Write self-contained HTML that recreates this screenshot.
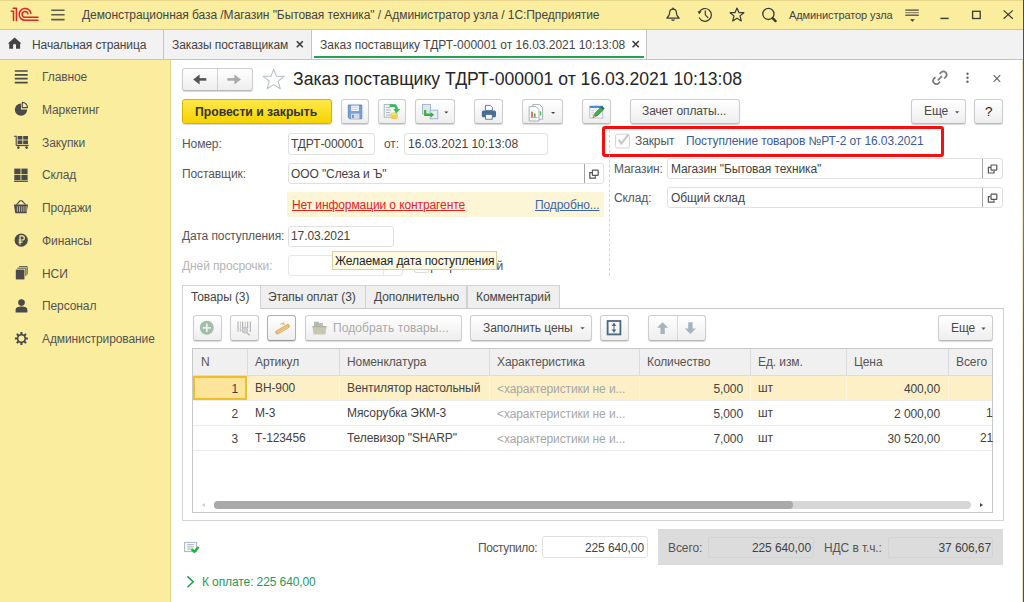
<!DOCTYPE html>
<html><head><meta charset="utf-8">
<style>
*{box-sizing:border-box;margin:0;padding:0}
html,body{width:1024px;height:602px;overflow:hidden;background:#fff;font-family:"Liberation Sans",sans-serif;font-size:12px;color:#545454;letter-spacing:-0.1px}
.a{position:absolute}
.t{position:absolute;white-space:nowrap;line-height:14px}
#top{left:0;top:0;width:1024px;height:30px;background:#fbed9e;border-top:1px solid #e6d58a;border-bottom:1px solid #d6c77f}
#tabs{left:0;top:30px;width:1024px;height:30px;background:#f2f2f2;border-bottom:1px solid #c4c4c4}
#side{left:0;top:60px;width:171px;height:542px;background:#fbed9e;border-right:1px solid #e0d28c}
#rline{left:1023px;top:0;width:1px;height:602px;background:linear-gradient(#3d4a52,#58625e 120px,#747a6e 220px,#6d5a3a 330px,#6a4826 420px,#5e4a30 602px)}
#rline2{left:1022px;top:60px;width:1px;height:542px;background:#ebe3c4}
.btn{position:absolute;border:1px solid #cdcdcd;border-bottom-color:#b9b9b9;border-radius:3px;background:linear-gradient(#ffffff,#eeeeee);box-shadow:0 1px 1px rgba(0,0,0,.16)}
.inp{position:absolute;border:1px solid #e0e0e0;border-radius:3px;background:#fff}
.lbl{color:#555}
.val{color:#424242}
.dd{position:absolute;width:0;height:0;border-left:3px solid transparent;border-right:3px solid transparent;border-top:3px solid #555}
</style></head><body>
<!-- top bar -->
<div id="top" class="a"></div>

<div class="t" style="left:82px;top:8px;color:#444;letter-spacing:-0.07px">Демонстрационная база /Магазин "Бытовая техника" / Администратор узла / 1С:Предприятие</div>
<div class="t" style="left:789px;top:8px;color:#444;font-size:11px">Администратор узла</div>

<!-- tabs -->
<div id="tabs" class="a"></div>
<div class="t" style="left:32px;top:38px;color:#444">Начальная страница</div>
<div class="a" style="left:163px;top:30px;width:1px;height:29px;background:#c4c4c4"></div>
<div class="t" style="left:172px;top:38px;color:#444">Заказы поставщикам</div>
<div class="a" style="left:311px;top:30px;width:1px;height:29px;background:#c4c4c4"></div>
<div class="a" style="left:312px;top:30px;width:335px;height:29px;background:#fff;border-right:1px solid #c4c4c4"></div>
<div class="a" style="left:314px;top:56px;width:330px;height:2px;background:#27a154"></div>
<div class="t" style="left:320px;top:38px;color:#444;letter-spacing:-0.02px">Заказ поставщику ТДРТ-000001 от 16.03.2021 10:13:08</div>

<!-- sidebar -->
<div id="side" class="a"></div>
<div class="t" style="left:42px;top:70px">Главное</div>
<div class="t" style="left:42px;top:103px">Маркетинг</div>
<div class="t" style="left:42px;top:136px">Закупки</div>
<div class="t" style="left:42px;top:168px">Склад</div>
<div class="t" style="left:42px;top:201px">Продажи</div>
<div class="t" style="left:42px;top:234px">Финансы</div>
<div class="t" style="left:42px;top:267px">НСИ</div>
<div class="t" style="left:42px;top:299px">Персонал</div>
<div class="t" style="left:42px;top:332px">Администрирование</div>

<div id="rline2" class="a"></div><div id="rline" class="a"></div>

<!-- form header -->
<div class="btn" style="left:182px;top:68px;width:71px;height:23px"></div>
<div class="a" style="left:217px;top:69px;width:1px;height:21px;background:#d0d0d0"></div>
<div class="t" style="left:293px;top:69px;font-size:17.6px;line-height:20px;color:#262626;letter-spacing:0">Заказ поставщику ТДРТ-000001 от 16.03.2021 10:13:08</div>

<!-- toolbar -->
<div class="a" style="left:182px;top:99px;width:150px;height:25px;border:1px solid #d2b400;border-radius:3px;background:linear-gradient(#ffe94a,#f5d200);box-shadow:0 1px 1px rgba(0,0,0,.15)"></div>
<div class="t" style="left:195px;top:105px;font-weight:bold;font-size:12.2px;color:#333;letter-spacing:0">Провести и закрыть</div>
<div class="btn" style="left:341px;top:99px;width:28px;height:25px"></div>
<div class="btn" style="left:378px;top:99px;width:28px;height:25px"></div>
<div class="btn" style="left:415px;top:99px;width:40px;height:25px"></div>
<div class="btn" style="left:474px;top:99px;width:29px;height:25px"></div>
<div class="btn" style="left:522px;top:99px;width:41px;height:25px"></div>
<div class="btn" style="left:582px;top:99px;width:29px;height:25px"></div>
<div class="btn" style="left:630px;top:99px;width:110px;height:25px"></div>
<div class="t" style="left:642px;top:104px;color:#4a4a4a">Зачет оплаты...</div>
<div class="btn" style="left:911px;top:99px;width:55px;height:25px"></div>
<div class="t" style="left:924px;top:104px;color:#4a4a4a">Еще</div>
<div class="btn" style="left:974px;top:99px;width:29px;height:25px"></div>
<div class="t" style="left:985px;top:104px;color:#222;font-size:13.5px;line-height:16px">?</div>

<!-- red box -->
<div class="a" style="left:602px;top:126px;width:342px;height:31px;border:3px solid #fb0d0d;border-radius:3px"></div>
<div class="t" style="left:635px;top:134px">Закрыт</div>
<div class="t" style="left:686px;top:134px;color:#3c5a9a">Поступление товаров №РТ-2 от 16.03.2021</div>

<!-- fields left -->
<div class="t" style="left:182px;top:137px">Номер:</div>
<div class="inp" style="left:288px;top:133px;width:87px;height:22px"></div>
<div class="t val" style="left:291px;top:137px">ТДРТ-000001</div>
<div class="t" style="left:384px;top:137px">от:</div>
<div class="inp" style="left:404px;top:133px;width:144px;height:22px"></div>
<div class="t val" style="left:408px;top:137px;letter-spacing:0">16.03.2021 10:13:08</div>

<div class="t" style="left:182px;top:167px">Поставщик:</div>
<div class="inp" style="left:288px;top:163px;width:316px;height:21px"></div>
<div class="a" style="left:584px;top:164px;width:1px;height:19px;background:#a6a6a6"></div>
<div class="t val" style="left:291px;top:167px">ООО "Слеза и Ъ"</div>

<div class="a" style="left:287px;top:192px;width:317px;height:25px;background:#fdf6d6"></div>
<div class="t" style="left:292px;top:198px;color:#e8201e;text-decoration:underline">Нет информации о контрагенте</div>
<div class="t" style="left:535px;top:198px;color:#3d63a8;text-decoration:underline">Подробно...</div>

<div class="t" style="left:182px;top:229px">Дата поступления:</div>
<div class="inp" style="left:288px;top:226px;width:106px;height:21px"></div>
<div class="t val" style="left:291px;top:229px">17.03.2021</div>

<div class="t" style="left:182px;top:259px;color:#b5b5b5">Дней просрочки:</div>
<div class="inp" style="left:288px;top:255px;width:115px;height:21px;border-color:#e6e6e6"></div>

<!-- dashed separator -->
<div class="a" style="left:609px;top:130px;width:0;height:146px;border-left:1px dashed #d6d6d6"></div>

<!-- fields right -->
<div class="t" style="left:614px;top:162px">Магазин:</div>
<div class="inp" style="left:667px;top:158px;width:336px;height:21px"></div>
<div class="a" style="left:982px;top:159px;width:1px;height:19px;background:#a6a6a6"></div>
<div class="t val" style="left:671px;top:162px">Магазин "Бытовая техника"</div>
<div class="t" style="left:614px;top:191px">Склад:</div>
<div class="inp" style="left:667px;top:187px;width:336px;height:21px"></div>
<div class="a" style="left:982px;top:188px;width:1px;height:19px;background:#a6a6a6"></div>
<div class="t val" style="left:671px;top:191px">Общий склад</div>

<div class="a" style="left:383px;top:256px;width:1px;height:19px;background:#e6e6e6"></div>
<div class="a" style="left:391px;top:268px;width:0;height:0;border-left:2px solid transparent;border-right:2px solid transparent;border-top:2px solid #666"></div>
<div class="a" style="left:414px;top:258px;width:15px;height:15px;border:1px solid #dcdcdc;border-radius:2px;background:#fff"></div>
<div class="t" style="left:403px;top:259px;width:100px;text-align:right;overflow:hidden;color:#4d4d4d">Просроченный</div>
<!-- tooltip -->
<div class="a" style="left:332px;top:251px;width:165px;height:19px;background:#fffbe3;border:1px solid #d9cf9f"></div>
<div class="t" style="left:335px;top:254px;color:#222">Желаемая дата поступления</div>

<!-- tab panel -->
<div class="a" style="left:182px;top:308px;width:822px;height:213px;border:1px solid #d2d2d2;border-top-color:#c8c8c8"></div>
<div class="a" style="left:182px;top:285px;width:79px;height:24px;background:#fff;border:1px solid #d2d2d2;border-bottom:none"></div>
<div class="a" style="left:260px;top:285px;width:106px;height:23px;background:#efefef;border:1px solid #d2d2d2;border-bottom:none"></div>
<div class="a" style="left:365px;top:285px;width:102px;height:23px;background:#efefef;border:1px solid #d2d2d2;border-bottom:none"></div>
<div class="a" style="left:467px;top:285px;width:93px;height:23px;background:#efefef;border:1px solid #d2d2d2;border-bottom:none"></div>
<div class="t" style="left:191px;top:290px;color:#444">Товары (3)</div>
<div class="t" style="left:268px;top:290px;color:#444">Этапы оплат (3)</div>
<div class="t" style="left:374px;top:290px;color:#444">Дополнительно</div>
<div class="t" style="left:476px;top:290px;color:#444">Комментарий</div>

<div class="btn" style="left:193px;top:315px;width:29px;height:26px"></div>
<div class="btn" style="left:230px;top:315px;width:29px;height:26px"></div>
<div class="btn" style="left:267px;top:315px;width:29px;height:26px;border-color:#b0b0b0;border-bottom-color:#999"></div>
<div class="btn" style="left:305px;top:315px;width:157px;height:26px"></div>
<div class="t" style="left:333px;top:321px;color:#aaa;letter-spacing:0.1px">Подобрать товары...</div>
<div class="btn" style="left:470px;top:315px;width:122px;height:26px"></div>
<div class="t" style="left:483px;top:321px;color:#4a4a4a">Заполнить цены</div>
<div class="btn" style="left:600px;top:315px;width:29px;height:26px"></div>
<div class="btn" style="left:648px;top:315px;width:58px;height:26px"></div>
<div class="a" style="left:677px;top:316px;width:1px;height:24px;background:#d8d8d8"></div>
<div class="btn" style="left:938px;top:315px;width:55px;height:26px"></div>
<div class="t" style="left:951px;top:321px;color:#4a4a4a">Еще</div>

<!-- table -->
<div class="a" style="left:192px;top:348px;width:801px;height:165px;border:1px solid #c8c8c8;background:#fff"></div>
<div class="a" style="left:193px;top:349px;width:799px;height:27px;background:#f0f0f0;border-bottom:1px solid #dcdcdc"></div>
<div class="t" style="left:201px;top:355px">N</div>
<div class="t" style="left:255px;top:355px">Артикул</div>
<div class="t" style="left:347px;top:355px">Номенклатура</div>
<div class="t" style="left:497px;top:355px">Характеристика</div>
<div class="t" style="left:647px;top:355px">Количество</div>
<div class="t" style="left:758px;top:355px">Ед. изм.</div>
<div class="t" style="left:854px;top:355px">Цена</div>
<div class="t" style="left:956px;top:355px">Всего</div>


<!-- column dividers header -->
<div class="a" style="left:247px;top:349px;width:1px;height:27px;background:#dcdcdc"></div>
<div class="a" style="left:339px;top:349px;width:1px;height:27px;background:#dcdcdc"></div>
<div class="a" style="left:489px;top:349px;width:1px;height:27px;background:#dcdcdc"></div>
<div class="a" style="left:639px;top:349px;width:1px;height:27px;background:#dcdcdc"></div>
<div class="a" style="left:750px;top:349px;width:1px;height:27px;background:#dcdcdc"></div>
<div class="a" style="left:846px;top:349px;width:1px;height:27px;background:#dcdcdc"></div>
<div class="a" style="left:948px;top:349px;width:1px;height:27px;background:#dcdcdc"></div>
<!-- row1 -->
<div class="a" style="left:193px;top:376px;width:799px;height:24px;background:#fdf0c6"></div>
<div class="a" style="left:247px;top:376px;width:1px;height:24px;background:#fff6dc"></div>
<div class="a" style="left:339px;top:376px;width:1px;height:24px;background:#fff6dc"></div>
<div class="a" style="left:489px;top:376px;width:1px;height:24px;background:#fff6dc"></div>
<div class="a" style="left:639px;top:376px;width:1px;height:24px;background:#fff6dc"></div>
<div class="a" style="left:750px;top:376px;width:1px;height:24px;background:#fff6dc"></div>
<div class="a" style="left:846px;top:376px;width:1px;height:24px;background:#fff6dc"></div>
<div class="a" style="left:948px;top:376px;width:1px;height:24px;background:#fff6dc"></div>
<div class="a" style="left:193px;top:376px;width:54px;height:24px;background:#fce49a;border:2px solid #f3bd25"></div>
<div class="a" style="left:193px;top:400px;width:799px;height:1px;background:#ececec"></div>
<div class="a" style="left:193px;top:425px;width:799px;height:1px;background:#ececec"></div>
<div class="a" style="left:193px;top:450px;width:799px;height:1px;background:#ececec"></div>
<div class="t val" style="left:193px;top:382px;width:45px;text-align:right">1</div>
<div class="t val" style="left:255px;top:381px">ВН-900</div>
<div class="t val" style="left:347px;top:381px">Вентилятор настольный</div>
<div class="t" style="left:497px;top:382px;color:#a6a6a6">&lt;характеристики не и...</div>
<div class="t val" style="left:640px;top:382px;width:103px;text-align:right">5,000</div>
<div class="t val" style="left:758px;top:381px">шт</div>
<div class="t val" style="left:847px;top:382px;width:93px;text-align:right">400,00</div>
<div class="t val" style="left:193px;top:407px;width:45px;text-align:right">2</div>
<div class="t val" style="left:255px;top:406px">М-3</div>
<div class="t val" style="left:347px;top:406px">Мясорубка ЭКМ-3</div>
<div class="t" style="left:497px;top:407px;color:#a6a6a6">&lt;характеристики не и...</div>
<div class="t val" style="left:640px;top:407px;width:103px;text-align:right">5,000</div>
<div class="t val" style="left:758px;top:406px">шт</div>
<div class="t val" style="left:847px;top:407px;width:93px;text-align:right">2 000,00</div>
<div class="t val" style="left:986px;top:406px">1</div>
<div class="t val" style="left:193px;top:432px;width:45px;text-align:right">3</div>
<div class="t val" style="left:255px;top:431px">Т-123456</div>
<div class="t val" style="left:347px;top:431px">Телевизор "SHARP"</div>
<div class="t" style="left:497px;top:432px;color:#a6a6a6">&lt;характеристики не и...</div>
<div class="t val" style="left:640px;top:432px;width:103px;text-align:right">7,000</div>
<div class="t val" style="left:758px;top:431px">шт</div>
<div class="t val" style="left:847px;top:432px;width:93px;text-align:right">30 520,00</div>
<div class="t val" style="left:980px;top:431px">21</div>
<!-- scrollbar -->
<div class="a" style="left:214px;top:501px;width:757px;height:8px;border-radius:4px;background:#d6d6d6"></div>
<div class="a" style="left:214px;top:501px;width:579px;height:8px;border-radius:4px;background:#a9a9a9"></div>
<div class="a" style="left:202px;top:503px;width:0;height:0;border-top:2.5px solid transparent;border-bottom:2.5px solid transparent;border-right:3px solid #ccc"></div>
<div class="a" style="left:980px;top:503px;width:0;height:0;border-top:2.5px solid transparent;border-bottom:2.5px solid transparent;border-left:3px solid #444"></div>

<!-- footer -->
<div class="t" style="left:478px;top:541px;letter-spacing:-0.4px">Поступило:</div>
<div class="inp" style="left:542px;top:536px;width:106px;height:22px"></div>
<div class="t val" style="left:545px;top:541px;width:99px;text-align:right">225 640,00</div>
<div class="a" style="left:658px;top:529px;width:345px;height:36px;background:#dcdcdc"></div>
<div class="a" style="left:708px;top:537px;width:106px;height:21px;border:1px solid #d3d3d3;border-radius:2px"></div>
<div class="a" style="left:888px;top:537px;width:105px;height:21px;border:1px solid #d3d3d3;border-radius:2px"></div>
<div class="t" style="left:668px;top:541px">Всего:</div>
<div class="t val" style="left:737px;top:541px;width:74px;text-align:right">225 640,00</div>
<div class="t" style="left:824px;top:541px">НДС в т.ч.:</div>
<div class="t val" style="left:888px;top:541px;width:103px;text-align:right">37 606,67</div>
<div class="t" style="left:202px;top:575px;color:#23995a">К оплате: 225 640,00</div>

<svg class="a" style="left:0;top:0" width="1024" height="602" viewBox="0 0 1024 602">
<!-- 1C logo -->
<g fill="none" stroke="#d9252b" stroke-width="1.5" stroke-linecap="round" stroke-linejoin="round">
<path d="M11.3,11.3 H13.5 V20.4"/>
<path d="M13.2,8.3 H16.4 V20.4"/>
<path d="M38,20.3 H25 A5.9,5.9 0 1 1 30.9,13.4"/>
<path d="M38,17.3 H25 A2.9,2.9 0 1 1 27.9,13.8"/>
</g>
<!-- hamburger -->
<g stroke="#5f5c4c" stroke-width="1.6">
<path d="M51.2,10.2 H64.6 M51.2,14.8 H64.6 M51.2,19.6 H64.6"/>
</g>
<!-- bell -->
<g fill="none" stroke="#3a3a3a" stroke-width="1.2" stroke-linejoin="round">
<path d="M673,9.2 C670.3,9.2 669.6,11 669.6,13 C669.6,15.4 668.6,16.6 666.8,18.2 H679.2 C677.4,16.6 676.4,15.4 676.4,13 C676.4,11 675.7,9.2 673,9.2 Z"/>
</g>
<circle cx="673" cy="8.4" r="0.9" fill="#3a3a3a"/>
<path d="M671,19.6 A2,1.4 0 0 0 675,19.6 Z" fill="#3a3a3a"/>
<!-- history -->
<g fill="none" stroke="#3a3a3a" stroke-width="1.2" stroke-linecap="round">
<path d="M699.4,11.8 A6.4,6.4 0 1 1 699.4,18"/>
<path d="M705.3,10.8 V14.8 L707.9,17.6"/>
</g>
<path d="M697.6,11.2 L701.6,11.6 L699.2,14.2 Z" fill="#3a3a3a"/>
<!-- star top -->
<path d="M737,8 L738.9,12.6 L743.9,12.7 L740,15.9 L741.3,20.9 L737,18.2 L732.7,20.9 L734,15.9 L730.1,12.7 L735.1,12.6 Z" fill="none" stroke="#3a3a3a" stroke-width="1.2" stroke-linejoin="round"/>
<!-- search -->
<circle cx="768.4" cy="13.9" r="5.6" fill="none" stroke="#3a3a3a" stroke-width="1.3"/>
<path d="M772.6,18.1 L775.6,21.1" stroke="#3a3a3a" stroke-width="2.4" stroke-linecap="round"/>
<!-- filter -->
<path d="M905.3,10.1 H918.8" stroke="#5a5848" stroke-width="1.4"/>
<path d="M905.3,12.6 H918.8" stroke="#8f8a6e" stroke-width="1.3"/>
<path d="M905.3,15.2 H918.8" stroke="#5a5848" stroke-width="1.4"/>
<path d="M910,19.2 H914.8 L912.4,21.8 Z" fill="#3a3a3a"/>
<!-- window controls -->
<path d="M940.4,18.4 H948.7" stroke="#3a3a3a" stroke-width="1.4"/>
<rect x="972.6" y="11.3" width="7.6" height="7.2" fill="none" stroke="#3a3a3a" stroke-width="1.3"/>
<path d="M1003.6,10.4 L1012.8,18.8 M1012.8,10.4 L1003.6,18.8" stroke="#3a3a3a" stroke-width="1.2"/>
<!-- home -->
<path d="M7.8,43.6 L14.6,37.4 L21.5,43.6 H20.1 V48.7 H16 V44.2 H13.1 V48.7 H9.2 V43.6 Z" fill="#444"/>
<!-- tab x -->
<path d="M296.8,41.2 L302.8,47.2 M302.8,41.2 L296.8,47.2" stroke="#3a3a3a" stroke-width="1.6"/>
<path d="M632.6,41 L638.8,47.2 M638.8,41 L632.6,47.2" stroke="#3a3a3a" stroke-width="1.6"/>
<!-- sidebar icons -->
<g stroke="#4a4a4a" stroke-width="1.7">
<path d="M14.8,71 H27.7 M14.8,74.9 H27.7 M14.8,78.7 H27.7 M14.8,82.6 H27.7"/>
</g>
<path d="M21,103.4 A6.2,6.2 0 1 0 27.2,109.6 H21 Z" fill="#4a4a4a"/>
<path d="M22.3,102.4 A5.2,5.2 0 0 1 27.5,107.6 H22.3 Z" fill="#fbed9e" stroke="#4a4a4a" stroke-width="1.2" stroke-linejoin="round"/>
<g fill="#4a4a4a">
<rect x="17.6" y="136" width="4.8" height="3.6"/><rect x="23.2" y="136" width="4.8" height="3.6"/>
<rect x="17.6" y="140.4" width="4.8" height="3.6"/><rect x="23.2" y="140.4" width="4.8" height="3.6"/>
<rect x="16.2" y="144.8" width="12.4" height="1.3"/>
<circle cx="18.4" cy="147.6" r="1.3"/><circle cx="26.6" cy="147.6" r="1.3"/>
</g>
<path d="M13.9,136.2 H16.2 V145.4" fill="none" stroke="#4a4a4a" stroke-width="1.1"/>
<g fill="#4a4a4a">
<rect x="14.3" y="168.6" width="6.2" height="5.4"/><rect x="21.4" y="168.6" width="6.2" height="5.4"/>
<rect x="14.3" y="174.8" width="6.2" height="5.2"/><rect x="21.4" y="174.8" width="6.2" height="5.2"/>
<rect x="14" y="180.6" width="13.9" height="1.3"/>
</g>
<path d="M13.9,204.6 H28 L26.6,213.2 H15.3 Z" fill="#4a4a4a"/>
<path d="M16.5,204.6 L20,200.8 H22 L25.5,204.6" fill="none" stroke="#4a4a4a" stroke-width="1.1"/>
<g stroke="#fbed9e" stroke-width="0.7"><path d="M17.3,206.2 V211.8 M19.5,206.2 V211.8 M21.7,206.2 V211.8 M23.9,206.2 V211.8 M26.1,206.2 V211.8"/></g>
<circle cx="21.2" cy="240.2" r="6.6" fill="#4a4a4a"/>
<path d="M20,244.8 V235.8 H22.2 A2.1,2.1 0 0 1 22.2,240 H18.6 M18.6,242.2 H22.4" fill="none" stroke="#fbed9e" stroke-width="1.2"/>
<path d="M17.2,268.2 H25.8 V276 M19,266.6 H27.2 V274.4" fill="none" stroke="#4a4a4a" stroke-width="0.9"/>
<rect x="15.8" y="269.6" width="8.6" height="9.8" fill="#4a4a4a"/>
<circle cx="21.5" cy="302.6" r="3.3" fill="#4a4a4a"/>
<path d="M15.6,312.4 V310 C15.6,307.6 18,306.6 21.5,306.6 C25,306.6 27.4,307.6 27.4,310 V312.4 Z" fill="#4a4a4a"/>

<path d="M27.92,337.47 L27.92,339.53 L25.97,339.60 L25.41,340.96 L26.74,342.38 L25.28,343.84 L23.86,342.51 L22.50,343.07 L22.43,345.02 L20.37,345.02 L20.30,343.07 L18.94,342.51 L17.52,343.84 L16.06,342.38 L17.39,340.96 L16.83,339.60 L14.88,339.53 L14.88,337.47 L16.83,337.40 L17.39,336.04 L16.06,334.62 L17.52,333.16 L18.94,334.49 L20.30,333.93 L20.37,331.98 L22.43,331.98 L22.50,333.93 L23.86,334.49 L25.28,333.16 L26.74,334.62 L25.41,336.04 L25.97,337.40 Z" fill="#4a4a4a"/><circle cx="21.4" cy="338.5" r="3" fill="#fbed9e"/>
</svg>

<svg class="a" style="left:0;top:0" width="1024" height="602" viewBox="0 0 1024 602">
<!-- nav arrows -->
<path d="M206.3,79.4 H198.5" fill="none" stroke="#555" stroke-width="2.6"/>
<path d="M193.2,79.4 L199.6,74.4 V84.4 Z" fill="#555"/>
<path d="M227.3,79.4 H235" fill="none" stroke="#aaa" stroke-width="2.6"/>
<path d="M240.9,79.4 L234.4,74.4 V84.4 Z" fill="#aaa"/>
<!-- star big -->
<path d="M273.7,69.2 L276.4,76.2 L284.2,76.4 L278.1,81.2 L280.3,88.8 L273.7,84.6 L267.1,88.8 L269.3,81.2 L263.2,76.4 L271,76.2 Z" fill="none" stroke="#b9c2cb" stroke-width="1.1" stroke-linejoin="round"/>
<!-- link icon -->
<g fill="none" stroke="#7a7a7a" stroke-width="1.7">
<path d="M935.5,77.1 L933.7,78.9 A3.3,3.3 0 0 0 938.3,83.5 L940.1,81.7"/>
<path d="M939.6,73.9 L941.4,72.1 A3.3,3.3 0 0 1 946,76.7 L944.2,78.5"/>
<path d="M937.8,80.3 L941.9,76.2"/>
</g>
<!-- dots -->
<circle cx="967.5" cy="73.8" r="1.2" fill="#666"/><circle cx="967.5" cy="77.7" r="1.2" fill="#666"/><circle cx="967.5" cy="81.7" r="1.2" fill="#666"/>
<!-- form close -->
<path d="M993.6,75.2 L1000.2,81.8 M1000.2,75.2 L993.6,81.8" stroke="#666" stroke-width="1.2"/>
<!-- save floppy -->
<path d="M348.3,105 H361.8 V118.8 H349.6 L348.3,117.5 Z" fill="#76a0d6" stroke="#4f7fbf" stroke-width="0.8"/>
<rect x="351.2" y="105.6" width="7.6" height="5.4" fill="#fff"/>
<path d="M352.2,107.3 H357.8 M352.2,109.3 H357.8" stroke="#a3bde0" stroke-width="0.8"/>
<rect x="351" y="113.6" width="8.4" height="5.2" fill="#d6dbe0"/>
<rect x="352.2" y="114.8" width="1.4" height="3.2" fill="#4f7fbf"/>
<!-- post icon -->
<rect x="384.2" y="104.6" width="11.5" height="12.6" fill="#f4f6f8" stroke="#9fb0c4" stroke-width="0.9"/>
<path d="M386,107.5 H390 M386,110 H391 M386,112.5 H390 M386,115 H391" stroke="#9aa4ae" stroke-width="0.8"/>
<ellipse cx="394.2" cy="117.6" rx="3.6" ry="1.6" fill="#e7c84a"/>
<rect x="390.6" y="114.2" width="7.2" height="3.4" fill="#f0d455"/>
<ellipse cx="394.2" cy="114.2" rx="3.6" ry="1.5" fill="#f6e27a" stroke="#d9b83a" stroke-width="0.5"/>
<path d="M389.6,105.6 H393.6 A3,3 0 0 1 396.6,108.6 V109.6" fill="none" stroke="#2fc15a" stroke-width="2.6"/>
<path d="M393.2,109 H400 L396.6,113.2 Z" fill="#2fc15a"/>
<!-- exchange icon -->
<rect x="422.5" y="104.4" width="8" height="9.5" fill="#dfe6ee" stroke="#9cb0c6" stroke-width="0.9"/>
<rect x="430.2" y="110.2" width="7.6" height="8.6" fill="#e8eef4" stroke="#9cb0c6" stroke-width="0.9"/>
<path d="M425.2,110 V114.8 H431.5" fill="none" stroke="#3cae3c" stroke-width="2.2"/>
<path d="M430.8,112.2 L434.2,114.8 L430.8,117.4 Z" fill="#3cae3c"/>
<path d="M444.2,111.4 H448.4 L446.3,113.5 Z" fill="#444"/>
<!-- printer -->
<path d="M485.4,105.4 H490.2 L492.4,107.6 V110.6 H485.4 Z" fill="#fff" stroke="#4a6f96" stroke-width="0.9"/>
<rect x="481.8" y="110.4" width="14.2" height="6.8" rx="1.5" fill="#4a6f96"/>
<rect x="485.6" y="114.4" width="6.6" height="4.8" fill="#fff" stroke="#4a6f96" stroke-width="0.9"/>
<!-- report icon -->
<path d="M532.8,104.6 H539.6 L542.6,107.6 V119.2 H532.8 Z" fill="#fff" stroke="#9aa6b4" stroke-width="0.9"/>
<path d="M529.2,106.6 H536 L539,109.6 V121 H529.2 Z" fill="#fff" stroke="#9aa6b4" stroke-width="0.9"/>
<rect x="531.2" y="111.6" width="1.6" height="5.8" fill="#e84c3d"/>
<rect x="534" y="113.4" width="1.6" height="4" fill="#4cbb4c"/>
<path d="M530.6,117.6 H537.6" stroke="#888" stroke-width="0.6"/>
<rect x="540" y="111.4" width="1.2" height="4" fill="#4cbb4c"/>
<path d="M551,112 H555.2 L553.1,114.1 Z" fill="#444"/>
<!-- edit icon -->
<rect x="589.8" y="106" width="13" height="12" fill="#f7f9fb" stroke="#a9b6c4" stroke-width="0.8"/>
<rect x="589.8" y="106" width="13" height="2" fill="#3d8fe0"/>
<path d="M591.5,110.6 H594 M591.5,112.8 H594 M591.5,115 H594" stroke="#aab" stroke-width="0.6"/>
<path d="M592.8,117.8 L595.2,112.8 L600.6,107.4 L603.2,110 L597.8,115.4 Z" fill="#3fae4c" stroke="#2f6e35" stroke-width="0.5"/>
<path d="M600.6,107.4 L602,106 L604.6,108.6 L603.2,110 Z" fill="#555"/>
<path d="M592.8,117.8 L593.8,115 L595.6,116.8 Z" fill="#d9a25a"/>
<!-- dropdown on Еще and Заполнить -->
<path d="M955,111.3 H959.2 L957.1,113.6 Z" fill="#555"/>
<path d="M580.4,327.2 H584.6 L582.5,329.5 Z" fill="#555"/>
<path d="M981.4,327.6 H985.6 L983.5,329.9 Z" fill="#555"/>
<!-- open icons -->
<g fill="none" stroke="#555" stroke-width="1.2">
<rect x="592.4" y="170.2" width="5.8" height="5.2" rx="0.6"/>
<path d="M592,172.6 H589.8 V178.2 H595.4 V176.2"/>
<rect x="991" y="165" width="5.8" height="5.2" rx="0.6"/>
<path d="M990.6,167.4 H988.4 V173 H994 V171"/>
<rect x="991" y="194.2" width="5.8" height="5.2" rx="0.6"/>
<path d="M990.6,196.6 H988.4 V202.2 H994 V200.2"/>
</g>
<!-- checkbox closed -->
<rect x="615.6" y="134.2" width="13.8" height="13.8" rx="1.5" fill="#fff" stroke="#d2d2d2" stroke-width="1"/>
<path d="M618.6,139.6 L621.4,143.6 L628.4,134.4" fill="none" stroke="#c6c6c6" stroke-width="2"/>
<!-- plus icon -->
<circle cx="206.8" cy="327.8" r="7" fill="#a3bdab"/>
<path d="M206.8,323.6 V332 M202.6,327.8 H211" stroke="#e8efe9" stroke-width="1.8"/>
<!-- barcode -->
<g stroke="#b5b5b5">
<path d="M238,321.6 V331.8" stroke-width="1.2"/><path d="M240.4,321.6 V331.8" stroke-width="0.8"/>
<path d="M242.6,321.6 V328" stroke-width="1.3"/><path d="M245.2,321.6 V327" stroke-width="0.8"/>
<path d="M247.6,321.6 V328" stroke-width="1.3"/><path d="M250.4,321.6 V331.8" stroke-width="1.2"/>
</g>
<path d="M246.6,332.4 L249.6,335.4" stroke="#c9a88a" stroke-width="1.3"/>
<circle cx="244.8" cy="330.2" r="2.9" fill="#c7d3e3" stroke="#c0b09e" stroke-width="0.7"/>
<!-- eraser/brush -->
<path d="M276.2,331 L287.2,324.4 A1.8,1.8 0 0 1 289,327.4 L278,334 A1.8,1.8 0 0 1 276.2,331 Z" fill="#e3b665" stroke="#d09a45" stroke-width="0.6"/>
<path d="M277.4,331.6 L287.6,325.6 M278.2,333 L288.2,327" stroke="#f7dfae" stroke-width="0.6"/>
<path d="M280.4,324.2 L283.6,322.6 L284.6,324.8" fill="#ecc27a" stroke="#d9a550" stroke-width="0.6"/>
<!-- basket gray -->
<rect x="314" y="321.8" width="5" height="5" fill="#a9c2a9"/>
<rect x="318" y="323" width="5" height="4" fill="#b9b9d6"/>
<path d="M312.4,326.6 H326.6 L325.4,334.4 H313.6 Z" fill="#c9c7b2"/>
<path d="M312.4,326.6 H326.6" stroke="#b3b19a" stroke-width="1.2"/>
<!-- expand -->
<rect x="607.6" y="321" width="12.8" height="13.4" fill="none" stroke="#4d6680" stroke-width="1.8"/>
<path d="M614,323 V332.4" stroke="#4d6680" stroke-width="1"/>
<path d="M611.6,326 L614,323 L616.4,326 Z M611.6,329.4 L614,332.4 L616.4,329.4 Z" fill="#4d6680"/>
<!-- up/down -->
<path d="M662.6,322.2 L668.2,327.8 H664.8 V334 H660.4 V327.8 H657 Z" fill="#a7b3be"/>
<path d="M690.4,334 L696,328.4 H692.6 V322.2 H688.2 V328.4 H684.8 Z" fill="#a7b3be"/>
<!-- footer doc -->
<rect x="184.6" y="542.4" width="12" height="9.2" fill="#f6f7f9" stroke="#a8b4c2" stroke-width="1"/>
<path d="M187.2,544.6 H193.8 M187.2,546.8 H193.8 M187.2,549 H192" stroke="#9aa3ad" stroke-width="0.8"/>
<path d="M191.6,549.2 L194.3,551.8 L198.6,547" fill="none" stroke="#23b23a" stroke-width="2.4"/>
<!-- chevron -->
<path d="M187.4,576.4 L193.2,581.8 L187.4,587.2" fill="none" stroke="#1f9c5c" stroke-width="1.5"/>
</svg>
</body></html>
